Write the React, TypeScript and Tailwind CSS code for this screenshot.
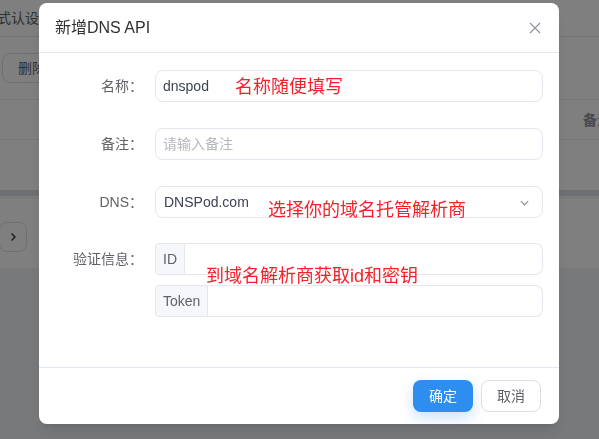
import React from 'react';

const font = { fontFamily: '"Liberation Sans", "Noto Sans CJK SC", sans-serif' };

function Background() {
  return (
    <div className="min-h-screen bg-[#f0f2f5] text-[#303133]" style={font}>
      <div className="bg-white h-[268px]">
        {/* tabs */}
        <div className="h-[37px] border-b border-[#e4e7ed] flex items-center text-sm text-[#606266]">
          <span className="-ml-[3px]">式认设置</span>
        </div>
        {/* toolbar */}
        <div className="h-[63px] border-b border-[#ebeef5] flex items-center pl-[2px]">
          <button className="h-[30px] px-[15px] rounded-lg border border-[#dcdfe6] text-sm text-[#606266]">
            删除选中
          </button>
        </div>
        {/* table header */}
        <div className="h-[40px] border-b border-[#ebeef5] flex items-center justify-end text-sm font-bold text-[#909399]">
          <span className="-mr-[12px]">备注</span>
        </div>
        <div className="h-[50px]" />
        <div className="h-[6px] bg-[#dcdfe6]" />
        <div className="h-[2px] border-b border-[#ebeef5]" />
        {/* pagination */}
        <div className="pt-[24px]">
          <div className="w-[28px] h-[30px] -ml-px rounded-lg border border-[#dcdfe6] flex items-center justify-center text-[#303133]">
            <svg width="10" height="10" viewBox="0 0 10 10" fill="none" stroke="currentColor" strokeWidth="1.4">
              <path d="M3.5 1.5 7 5 3.5 8.5" />
            </svg>
          </div>
        </div>
      </div>
    </div>
  );
}

function Field({ label, children }: { label: string; children: React.ReactNode }) {
  return (
    <div className="flex items-start">
      <div className="w-[104px] shrink-0 h-[32px] flex items-center justify-end text-sm text-[#606266]">{label}</div>
      <div className="flex-1 ml-[12px]">{children}</div>
    </div>
  );
}

function AddonInput({ addon }: { addon: string }) {
  return (
    <div className="flex h-[32px]">
      <div className="px-[7px] flex items-center bg-[#f5f7fa] border border-[#e4e7ed] rounded-l-[4px] text-sm text-[#606266]">
        {addon}
      </div>
      <div className="flex-1 border border-l-0 border-[#e4e7ed] rounded-r-lg" />
    </div>
  );
}

function Dialog() {
  return (
    <div className="fixed inset-0 bg-black/50 flex justify-start pl-[39px] pt-[3px]" style={font}>
      <div className="relative w-[520px] h-[421px] bg-white rounded-lg flex flex-col shadow-lg">
        <div className="h-[50px] flex items-center justify-between pl-[16px] pr-[18px] border-b border-[#e4e7ed]">
          <span className="text-base text-[#303133]">新增DNS API</span>
          <svg width="12" height="12" viewBox="0 0 12 12" fill="none" stroke="#909399" strokeWidth="1.2">
            <path d="M1 1 11 11M11 1 1 11" />
          </svg>
        </div>

        <div className="flex-1 pt-[17px] pr-[16px] flex flex-col">
          <Field label="名称：">
            <div className="h-[32px] px-[7px] flex items-center border border-[#e4e7ed] rounded-lg text-sm text-[#3c4354]">
              dnspod
            </div>
          </Field>
          <div className="mt-[26px]">
            <Field label="备注：">
              <div className="h-[32px] px-[7px] flex items-center border border-[#e4e7ed] rounded-lg text-sm text-[#b4b7bd]">
                请输入备注
              </div>
            </Field>
          </div>
          <div className="mt-[26px]">
            <Field label="DNS：">
              <div className="h-[32px] pl-[8px] pr-[12px] flex items-center justify-between border border-[#e4e7ed] rounded-lg text-sm text-[#3c4354]">
                <span>DNSPod.com</span>
                <svg width="11" height="11" viewBox="0 0 12 12" fill="none" stroke="#909399" strokeWidth="1.3">
                  <path d="M2 4.5 6 8.5 10 4.5" />
                </svg>
              </div>
            </Field>
          </div>
          <div className="mt-[25px]">
            <Field label="验证信息：">
              <div className="flex flex-col gap-[10px]">
                <AddonInput addon="ID" />
                <AddonInput addon="Token" />
              </div>
            </Field>
          </div>
        </div>

        <div className="h-[57px] border-t border-[#e4e7ed] flex items-start justify-end gap-[8px] pt-[12px] pr-[18px]">
          <button className="w-[60px] h-[32px] rounded-lg bg-[#2e8ef0] text-white text-sm shadow-[0_6px_14px_rgba(46,142,240,0.25)]">
            确定
          </button>
          <button className="w-[60px] h-[32px] rounded-lg border border-[#dcdfe6] bg-white text-sm text-[#606266]">
            取消
          </button>
        </div>

        {/* red annotations drawn over the form */}
        <span className="absolute left-[196px] top-[72px] text-[18px] leading-[24px] text-[#f4212b] whitespace-nowrap">名称随便填写</span>
        <span className="absolute left-[229px] top-[195px] text-[18px] leading-[24px] text-[#f4212b] whitespace-nowrap">选择你的域名托管解析商</span>
        <span className="absolute left-[167px] top-[261px] text-[18px] leading-[24px] text-[#f4212b] whitespace-nowrap">到域名解析商获取id和密钥</span>
      </div>
    </div>
  );
}

export default function App() {
  return (
    <div>
      <Background />
      <Dialog />
    </div>
  );
}
